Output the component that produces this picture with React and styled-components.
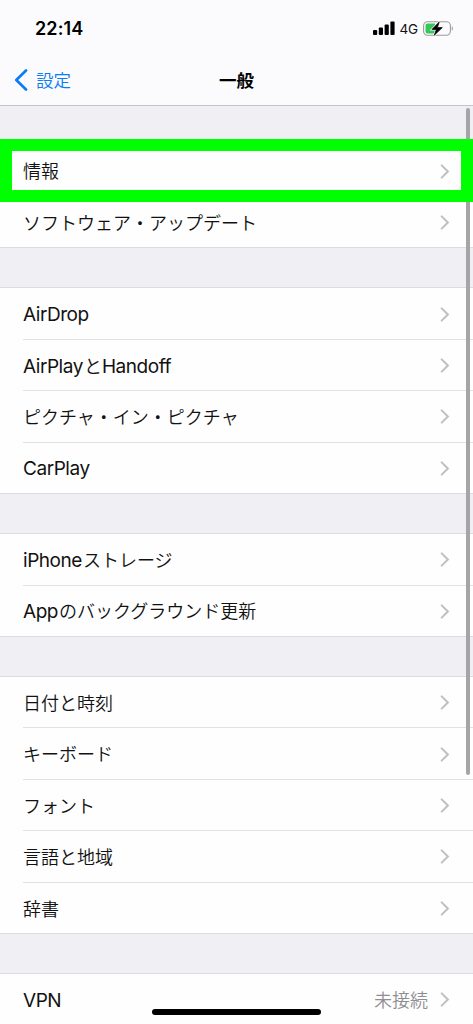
import React from 'react';
import styled, { createGlobalStyle } from 'styled-components';

const GlobalStyle = createGlobalStyle`
	* {
		box-sizing: border-box;
	}

	body {
		margin: 0;
		background: #f0eff4;
		font-family: Inter, 'Noto Sans CJK JP', sans-serif;
		color: #111;
	}
`;

const Screen = styled.main`
	position: relative;
	width: 473px;
	height: 1024px;
	overflow: hidden;
	background: #f0eff4;
`;

const TopBar = styled.header`
	height: 106px;
	background: #fbfbfd;
	border-bottom: 1px solid #c4c4c7;
`;

const StatusBar = styled.div`
	height: 55px;
	padding: 2px 19px 0 35px;
	display: flex;
	align-items: center;
	justify-content: space-between;
`;

const Clock = styled.time`
	font-size: 18px;
	font-weight: 600;
	letter-spacing: 0.1px;
	color: #000;
`;

const StatusIcons = styled.div`
	display: flex;
	align-items: center;
	gap: 5px;

	svg {
		display: block;
	}
`;

const Network = styled.span`
	font-size: 13.5px;
	font-weight: 400;
	letter-spacing: -0.2px;
	line-height: 16px;
	color: #111;
`;

const NavBar = styled.nav`
	height: 50px;
	padding: 0 14px;
	display: grid;
	grid-template-columns: 1fr auto 1fr;
	align-items: center;
`;

const BackButton = styled.button`
	display: flex;
	align-items: center;
	gap: 8px;
	padding: 0;
	border: none;
	background: none;
	font-family: inherit;
	font-size: 17.5px;
	font-weight: 350;
	line-height: 24px;
	color: #0b7cf5;

	span {
		padding-top: 1px;
	}
`;

const Title = styled.h1`
	margin: 0;
	padding-top: 2px;
	font-size: 17.5px;
	line-height: 24px;
	font-weight: 700;
	color: #000;
`;

const Groups = styled.div`
	padding-top: 39.4px;
	display: flex;
	flex-direction: column;
	gap: 40.2px;
`;

const Group = styled.section`
	background: #fefefe;
	box-shadow: 0 -1px 0 #dcdce0, inset 0 -1px 0 #dcdce0;
`;

const Row = styled.div`
	height: 51.4px;
	padding-left: 23px;
	display: flex;
`;

const RowBody = styled.div`
	flex: 1;
	padding: 1px 23px 0 0;
	display: flex;
	align-items: center;
	border-bottom: 1px solid ${({ $last }) => ($last ? 'transparent' : '#e2e2e4')};
`;

const Label = styled.span`
	flex: 1;
	padding-top: 2.4px;
	font-size: 18px;
	font-weight: 350;
	line-height: 26px;
	white-space: nowrap;
`;

const Latin = styled.span`
	margin-right: 1px;
	font-size: 19px;
	font-weight: 400;
	letter-spacing: -0.45px;
`;

const Value = styled.span`
	margin-right: 12px;
	padding-top: 2.4px;
	font-size: 18px;
	font-weight: 350;
	line-height: 26px;
	color: #8e8e92;
`;

const Highlight = styled.div`
	position: absolute;
	top: 139px;
	left: 0;
	width: 473px;
	height: 63px;
	border: 12px solid #00ff00;
`;

const ScrollThumb = styled.div`
	position: absolute;
	top: 108px;
	right: 3px;
	width: 4px;
	height: 667px;
	border-radius: 2px;
	background: #a5a5a8;
`;

const HomeIndicator = styled.div`
	position: absolute;
	left: 152px;
	bottom: 9px;
	width: 169px;
	height: 6px;
	border-radius: 3px;
	background: #000;
`;

const groups = [
	[{ label: '情報' }, { label: 'ソフトウェア・アップデート' }],
	[{ label: 'AirDrop' }, { label: 'AirPlayとHandoff' }, { label: 'ピクチャ・イン・ピクチャ' }, { label: 'CarPlay' }],
	[{ label: 'iPhoneストレージ' }, { label: 'Appのバックグラウンド更新' }],
	[
		{ label: '日付と時刻' },
		{ label: 'キーボード' },
		{ label: 'フォント' },
		{ label: '言語と地域' },
		{ label: '辞書' },
	],
	[{ label: 'VPN', value: '未接続' }],
];

// Latin words are set slightly larger and tighter than the kana around them
function MixedText({ text }) {
	return text
		.split(/([A-Za-z]+)/)
		.filter(Boolean)
		.map((part) => (/^[A-Za-z]/.test(part) ? <Latin key={part}>{part}</Latin> : part));
}

function SignalIcon() {
	return (
		<svg width="22" height="15" viewBox="0 0 22 15">
			<rect x="0" y="9" width="4.2" height="5" rx="1" />
			<rect x="5.8" y="6.4" width="4.2" height="7.6" rx="1" />
			<rect x="11.6" y="3.4" width="4.2" height="10.6" rx="1" />
			<rect x="17.4" y="0.6" width="4.2" height="13.4" rx="1" />
		</svg>
	);
}

function BatteryIcon() {
	return (
		<svg width="31" height="16" viewBox="0 0 31 16">
			<rect x="0.6" y="0.8" width="26.8" height="13.4" rx="4" fill="none" stroke="#9b9b9d" strokeWidth="1.1" />
			<path d="M28.8 5.3c1.5.5 1.5 3.9 0 4.4z" fill="#9b9b9d" />
			<path d="M4.5 2.5H12v10H4.5a2 2 0 0 1-2-2v-6a2 2 0 0 1 2-2z" fill="#35c75a" />
			<path d="M16.2 1 8.9 8.4h4.4L11.3 14.2l8-7.6h-4.9z" fill="#fbfbfd" stroke="#fbfbfd" strokeWidth="2" />
			<path d="M16.2 1 8.9 8.4h4.4L11.3 14.2l8-7.6h-4.9z" fill="#000" stroke="#000" strokeWidth="0.7" strokeLinejoin="round" />
		</svg>
	);
}

function BackIcon() {
	return (
		<svg width="14" height="22" viewBox="0 0 14 22" fill="none">
			<path d="M12 1.5 2.3 11 12 20.5" stroke="#0b7cf5" strokeWidth="2.7" strokeLinecap="round" strokeLinejoin="round" />
		</svg>
	);
}

function Chevron() {
	return (
		<svg width="10" height="15" viewBox="0 0 10 15" fill="none">
			<path d="M1.7 1.4 7.9 7.5 1.7 13.6" stroke="#bfbfc2" strokeWidth="2" strokeLinecap="round" />
		</svg>
	);
}

function App() {
	return (
		<>
			<GlobalStyle />
			<Screen>
				<TopBar>
					<StatusBar>
						<Clock>22:14</Clock>
						<StatusIcons>
							<SignalIcon />
							<Network>4G</Network>
							<BatteryIcon />
						</StatusIcons>
					</StatusBar>
					<NavBar>
						<BackButton>
							<BackIcon />
							<span>設定</span>
						</BackButton>
						<Title>一般</Title>
					</NavBar>
				</TopBar>
				<Groups>
					{groups.map((rows) => (
						<Group key={rows[0].label}>
							{rows.map(({ label, value }, i) => (
								<Row key={label}>
									<RowBody $last={i === rows.length - 1}>
										<Label>
											<MixedText text={label} />
										</Label>
										{value && <Value>{value}</Value>}
										<Chevron />
									</RowBody>
								</Row>
							))}
						</Group>
					))}
				</Groups>
				<ScrollThumb />
				<Highlight />
				<HomeIndicator />
			</Screen>
		</>
	);
}

export default App;
